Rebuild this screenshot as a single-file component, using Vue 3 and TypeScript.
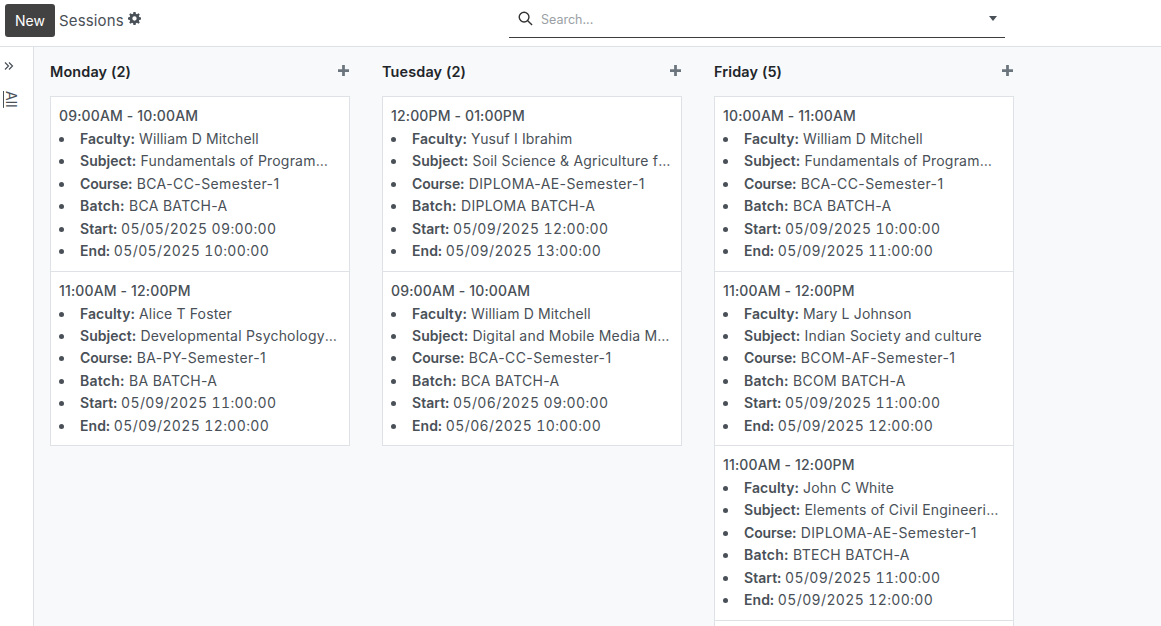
<script setup lang="ts">
interface Session {
  time: string
  faculty: string
  subject: string
  course: string
  batch: string
  start: string
  end: string
}

interface Day {
  name: string
  sessions: Session[]
}

const days: Day[] = [
  {
    name: 'Monday (2)',
    sessions: [
      {
        time: '09:00AM - 10:00AM',
        faculty: 'William D Mitchell',
        subject: 'Fundamentals of Programming',
        course: 'BCA-CC-Semester-1',
        batch: 'BCA BATCH-A',
        start: '05/05/2025 09:00:00',
        end: '05/05/2025 10:00:00',
      },
      {
        time: '11:00AM - 12:00PM',
        faculty: 'Alice T Foster',
        subject: 'Developmental Psychology and Learning',
        course: 'BA-PY-Semester-1',
        batch: 'BA BATCH-A',
        start: '05/09/2025 11:00:00',
        end: '05/09/2025 12:00:00',
      },
    ],
  },
  {
    name: 'Tuesday (2)',
    sessions: [
      {
        time: '12:00PM - 01:00PM',
        faculty: 'Yusuf I Ibrahim',
        subject: 'Soil Science & Agriculture fundamentals',
        course: 'DIPLOMA-AE-Semester-1',
        batch: 'DIPLOMA BATCH-A',
        start: '05/09/2025 12:00:00',
        end: '05/09/2025 13:00:00',
      },
      {
        time: '09:00AM - 10:00AM',
        faculty: 'William D Mitchell',
        subject: 'Digital and Mobile Media Marketing',
        course: 'BCA-CC-Semester-1',
        batch: 'BCA BATCH-A',
        start: '05/06/2025 09:00:00',
        end: '05/06/2025 10:00:00',
      },
    ],
  },
  {
    name: 'Friday (5)',
    sessions: [
      {
        time: '10:00AM - 11:00AM',
        faculty: 'William D Mitchell',
        subject: 'Fundamentals of Programming',
        course: 'BCA-CC-Semester-1',
        batch: 'BCA BATCH-A',
        start: '05/09/2025 10:00:00',
        end: '05/09/2025 11:00:00',
      },
      {
        time: '11:00AM - 12:00PM',
        faculty: 'Mary L Johnson',
        subject: 'Indian Society and culture',
        course: 'BCOM-AF-Semester-1',
        batch: 'BCOM BATCH-A',
        start: '05/09/2025 11:00:00',
        end: '05/09/2025 12:00:00',
      },
      {
        time: '11:00AM - 12:00PM',
        faculty: 'John C White',
        subject: 'Elements of Civil Engineering',
        course: 'DIPLOMA-AE-Semester-1',
        batch: 'BTECH BATCH-A',
        start: '05/09/2025 11:00:00',
        end: '05/09/2025 12:00:00',
      },
    ],
  },
]
</script>

<template>
  <div class="page">
    <header class="topbar">
      <div class="left">
        <button class="new-btn" type="button">New</button>
        <span class="title">Sessions</span>
        <svg class="gear" viewBox="0 0 24 24" width="13" height="13">
          <path
            fill-rule="evenodd"
            d="M10 0h4l.6 3.2 2 .8L19.300 2.200 21.800 4.700 20 7.400l.8 2L24 10v4l-3.200.6-.8 2 1.800 2.700-2.500 2.500L16.600 20l-2 .8L14 24h-4l-.6-3.200-2-.8-2.700 1.800-2.500-2.500L4 16.600l-.8-2L0 14v-4l3.200-.6.800-2L2.200 4.700 4.700 2.200 7.400 4l2-.8zM12 8a4 4 0 1 0 0 8 4 4 0 0 0 0-8z"
          />
        </svg>
      </div>
      <div class="search">
        <svg class="search-icon" viewBox="0 0 16 16" width="15" height="15">
          <circle cx="6.500" cy="6.500" r="5.200" />
          <path d="M10.400 10.400 15 15" />
        </svg>
        <span class="placeholder">Search...</span>
        <span class="caret"></span>
      </div>
    </header>
    <div class="content">
      <aside class="side">
        <svg class="chevrons" viewBox="0 0 10 10" width="10" height="10">
          <path d="M1 1.500 4.500 5 1 8.500M5 1.500 8.500 5 5 8.500" />
        </svg>
        <span class="all">All</span>
      </aside>
      <main class="board">
        <section v-for="day in days" :key="day.name" class="column">
          <div class="column-head">
            <span class="day">{{ day.name }}</span>
            <svg class="plus" viewBox="0 0 12 12" width="11" height="11">
              <path d="M4.500 0h3v4.500H12v3H7.500V12h-3V7.500H0v-3h4.500z" />
            </svg>
          </div>
          <div class="cards">
            <article v-for="(s, i) in day.sessions" :key="i" class="card">
              <div class="time">{{ s.time }}</div>
              <ul>
                <li><div class="line"><b>Faculty:</b> {{ s.faculty }}</div></li>
                <li><div class="line subject"><b>Subject:</b> {{ s.subject }}</div></li>
                <li><div class="line course"><b>Course:</b> {{ s.course }}</div></li>
                <li><div class="line batch"><b>Batch:</b> {{ s.batch }}</div></li>
                <li><div class="line date"><b>Start:</b> {{ s.start }}</div></li>
                <li><div class="line date"><b>End:</b> {{ s.end }}</div></li>
              </ul>
            </article>
            <article v-if="day.sessions.length > 2" class="card"></article>
          </div>
        </section>
      </main>
    </div>
  </div>
</template>

<style>
html,
body {
  margin: 0;
  overflow: hidden;
}
</style>

<style scoped>
.page {
  height: 626px;
  display: flex;
  flex-direction: column;
  font-family: Inter, 'Noto Sans', sans-serif;
  font-size: 14px;
  letter-spacing: 0.15px;
  color: #495057;
  background: #fff;
  overflow: hidden;
}

.topbar {
  height: 46px;
  flex: none;
  display: flex;
  border-bottom: 1px solid #dee2e6;
  box-sizing: content-box;
}

.left {
  width: 509px;
  padding: 4px 0 0 5px;
  box-sizing: border-box;
  display: flex;
  align-items: flex-start;
}

.new-btn {
  width: 50px;
  height: 33px;
  border: none;
  border-radius: 3px;
  background: #424242;
  color: #fff;
  font: inherit;
  padding: 0;
}

.title {
  margin-left: 4px;
  margin-top: 8px;
  line-height: 17px;
  font-size: 15px;
}

.gear {
  margin: 8px 0 0 4px;
  fill: #495057;
}

.search {
  width: 496px;
  height: 38px;
  border-bottom: 1px solid #3d3d3d;
  box-sizing: border-box;
  display: flex;
  align-items: center;
  padding: 0 9px;
}

.search-icon {
  fill: none;
  stroke: #333;
  stroke-width: 1.500;
}

.placeholder {
  margin: 1px 0 0 8px;
  font-size: 12.500px;
  letter-spacing: 0;
  color: #9a9fa5;
  flex: 1;
}

.caret {
  border-left: 4.500px solid transparent;
  border-right: 4.500px solid transparent;
  border-top: 5px solid #495057;
  margin-right: -1px;
}

.content {
  flex: 1;
  display: flex;
  min-height: 0;
}

.side {
  flex: none;
  width: 34px;
  border-right: 1px solid #dee2e6;
  display: flex;
  flex-direction: column;
  align-items: flex-start;
  padding: 14px 0 0 4px;
  box-sizing: border-box;
}

.chevrons {
  fill: none;
  stroke: #495057;
  stroke-width: 1.200;
}

.all {
  writing-mode: vertical-lr;
  text-decoration: underline;
  margin: 20px 0 0 -2px;
  line-height: 18px;
}

.board {
  flex: 1;
  display: flex;
  align-items: flex-start;
  gap: 32px;
  padding: 0 16px;
  background: #f8f9fa;
}

.column {
  width: 300px;
  flex: none;
}

.column-head {
  height: 49px;
  display: flex;
  align-items: center;
  justify-content: space-between;
}

.day {
  font-weight: 600;
  font-size: 14.400px;
  color: #212529;
}

.plus {
  fill: #6c757d;
  margin-right: 1px;
  margin-bottom: 2px;
}

.cards {
  background: #fff;
  border: 1px solid #dee2e6;
}

.card {
  height: 174.500px;
  padding: 7px 8px 0;
  box-sizing: border-box;
  border-bottom: 1px solid #dee2e6;
}

.card:last-child {
  height: 173.500px;
  border-bottom: none;
}

.time {
  font-weight: 500;
  line-height: 24px;
}

ul {
  margin: 0;
  padding-left: 21px;
  list-style: none;
}

li {
  position: relative;
  line-height: 22.400px;
}

li::before {
  content: '';
  position: absolute;
  left: -21px;
  top: 9px;
  width: 5px;
  height: 5px;
  border-radius: 50%;
  background: #495057;
}

.line {
  white-space: nowrap;
  overflow: hidden;
  text-overflow: ellipsis;
}

.line b {
  letter-spacing: 0.05px;
}

.subject {
  letter-spacing: 0.2px;
  padding-right: 2px;
}

.course {
  letter-spacing: 0.4px;
}

.line.course b {
  letter-spacing: -0.15px;
}

.batch {
  letter-spacing: 0.3px;
}

.line.batch b {
  letter-spacing: 0.25px;
}

.date {
  font-variant-numeric: tabular-nums;
  letter-spacing: 0.36px;
}

b {
  font-weight: 600;
}
</style>
